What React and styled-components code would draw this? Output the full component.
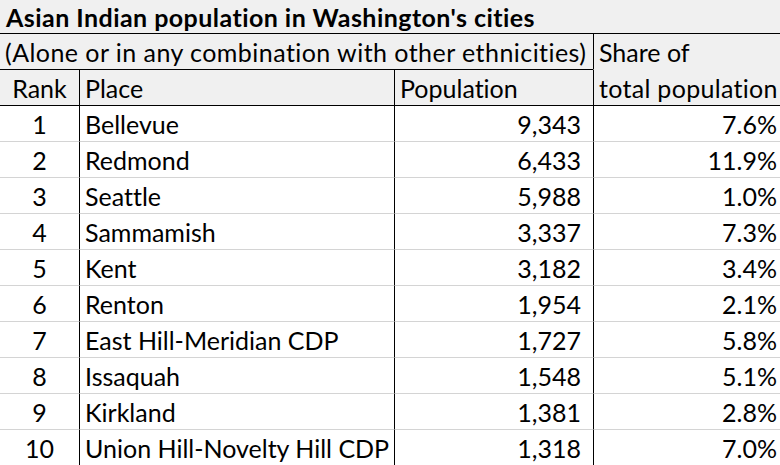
import React from "react";
import styled, { createGlobalStyle } from "styled-components";

const Global = createGlobalStyle`
  html, body { margin: 0; padding: 0; background: #ffffff; overflow: hidden; }
  body { font-family: Lato, "Open Sans", sans-serif; }
`;

const Sheet = styled.div`
  display: grid;
  grid-template-columns: 79px 315px 199px 187px;
  grid-template-rows: 34px 36px 36px repeat(10, 36px);
  width: 780px;
  height: 465px;
  overflow: hidden;
  color: #000;
  font-family: Lato, "Open Sans", sans-serif;
  font-size: 25px;
  font-variant-ligatures: none;
`;

const Cell = styled.div`
  box-sizing: border-box;
  display: flex;
  align-items: center;
  white-space: nowrap;
  overflow: visible;
  padding: ${(p) => p.$pad || "0 5px"};
  letter-spacing: ${(p) => p.$track || "0"};
  justify-content: ${(p) =>
    p.$align === "right" ? "flex-end" : p.$align === "center" ? "center" : "flex-start"};
  background: ${(p) => (p.$head ? "#f0f0f0" : "#ffffff")};
  border-bottom: 1px solid ${(p) => (p.$bottom ? p.$bottom : "#d4d4d4")};
  border-left: ${(p) => (p.$left ? "1px solid #000" : "none")};
  grid-column: ${(p) => p.$span || "auto"};
`;

const Title = styled(Cell)`
  font-weight: 700;
  padding-left: 6px;
  padding-top: 1px;
`;

const rows = [
  ["1", "Bellevue", "9,343", "7.6%"],
  ["2", "Redmond", "6,433", "11.9%"],
  ["3", "Seattle", "5,988", "1.0%"],
  ["4", "Sammamish", "3,337", "7.3%"],
  ["5", "Kent", "3,182", "3.4%"],
  ["6", "Renton", "1,954", "2.1%"],
  ["7", "East Hill-Meridian CDP", "1,727", "5.8%"],
  ["8", "Issaquah", "1,548", "5.1%"],
  ["9", "Kirkland", "1,381", "2.8%"],
  ["10", "Union Hill-Novelty Hill CDP", "1,318", "7.0%"],
];

export default function App() {
  return (
    <>
      <Global />
      <Sheet>
        <Title $head $span="1 / 5" $bottom="#000" $track="0.45px">
          Asian Indian population in Washington's cities
        </Title>
        <Cell $head $span="1 / 4" $bottom="#000" $track="0.45px">
          (Alone or in any combination with other ethnicities)
        </Cell>
        <Cell $head $left $bottom="#f0f0f0">Share of</Cell>
        <Cell $head $align="center" $bottom="#000">Rank</Cell>
        <Cell $head $left $bottom="#000">Place</Cell>
        <Cell $head $left $bottom="#000">Population</Cell>
        <Cell $head $left $bottom="#000" $track="0.3px">total population</Cell>
        {rows.map((r) => (
          <React.Fragment key={r[0]}>
            <Cell $align="center">{r[0]}</Cell>
            <Cell $left>{r[1]}</Cell>
            <Cell $left $align="right" $pad="0 12px 0 5px">{r[2]}</Cell>
            <Cell $left $align="right" $pad="0 3px 0 5px">{r[3]}</Cell>
          </React.Fragment>
        ))}
      </Sheet>
    </>
  );
}
